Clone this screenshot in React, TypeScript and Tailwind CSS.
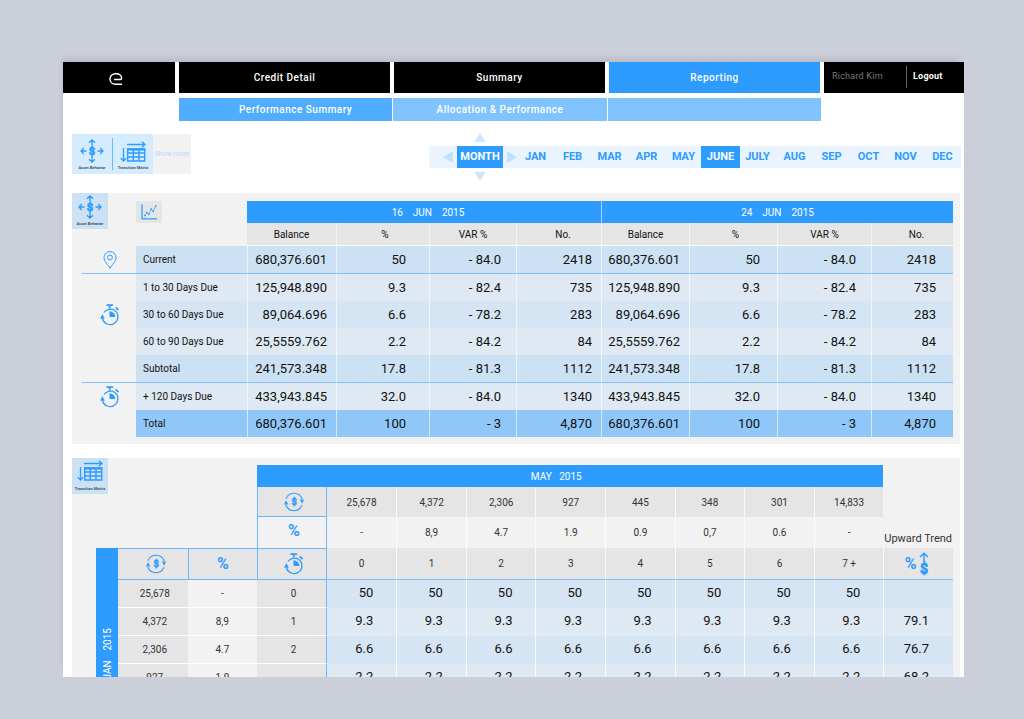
import { useState, type ReactNode } from "react";
import clsx from "clsx";

const MONTHS = ["JAN", "FEB", "MAR", "APR", "MAY", "JUNE", "JULY", "AUG", "SEP", "OCT", "NOV", "DEC"];

type BehaviorRow = {
  label: string;
  icon?: "pin" | "timer";
  values: [string, string, string, string];
  tone: string;
  line?: boolean;
};

const BEHAVIOR: BehaviorRow[] = [
  { label: "Current", icon: "pin", values: ["680,376.601", "50", "- 84.0", "2418"], tone: "bg-[#cce1f4]", line: true },
  { label: "1 to 30 Days Due", values: ["125,948.890", "9.3", "- 82.4", "735"], tone: "bg-[#dfe9f3]" },
  { label: "30 to 60 Days Due", icon: "timer", values: ["89,064.696", "6.6", "- 78.2", "283"], tone: "bg-[#d5e5f4]" },
  { label: "60 to 90 Days Due", values: ["25,5559.762", "2.2", "- 84.2", "84"], tone: "bg-[#dfe9f3]" },
  { label: "Subtotal", values: ["241,573.348", "17.8", "- 81.3", "1112"], tone: "bg-[#cce1f4]", line: true },
  { label: "+ 120 Days Due", icon: "timer", values: ["433,943.845", "32.0", "- 84.0", "1340"], tone: "bg-[#dfe9f3]" },
  { label: "Total", values: ["680,376.601", "100", "- 3", "4,870"], tone: "bg-[#90c7f9]" },
];

const BEHAVIOR_PADDING = ["pr-[9px]", "pr-[23px]", "pr-[15px]", "pr-[9px]", "pr-[9px]", "pr-[17px]", "pr-[15px]", "pr-[17px]"];

const MATRIX_HEAD = [
  { balance: "25,678", percent: "-", bucket: "0" },
  { balance: "4,372", percent: "8,9", bucket: "1" },
  { balance: "2,306", percent: "4.7", bucket: "2" },
  { balance: "927", percent: "1.9", bucket: "3" },
  { balance: "445", percent: "0.9", bucket: "4" },
  { balance: "348", percent: "0,7", bucket: "5" },
  { balance: "301", percent: "0.6", bucket: "6" },
  { balance: "14,833", percent: "-", bucket: "7 +" },
];

const MATRIX_ROWS = [
  { balance: "25,678", percent: "-", bucket: "0", value: "50", trend: "" },
  { balance: "4,372", percent: "8,9", bucket: "1", value: "9.3", trend: "79.1" },
  { balance: "2,306", percent: "4.7", bucket: "2", value: "6.6", trend: "76.7" },
  { balance: "927", percent: "1.9", bucket: "", value: "2.2", trend: "68.2" },
];

function Dollar({ x, y, size }: { x: number; y: number; size: number }) {
  return (
    <text
      x={x}
      y={y}
      fontSize={size}
      fontWeight="900"
      textAnchor="middle"
      fill="#2e9bff"
      stroke="#2e9bff"
      strokeWidth="0.6"
      fontFamily="Roboto, sans-serif"
    >
      $
    </text>
  );
}

function AssetBehaviorIcon() {
  return (
    <svg viewBox="0 0 24 24" className="size-6" fill="none" stroke="#2e9bff" strokeWidth="1.3" aria-hidden="true">
      <path d="M12 6.500V1M9 3.800 12 1l3 2.800M12 17.500v5.500M9 20.200l3 2.800 3-2.800M6.500 12H1M3.800 9 1 12l2.800 3M17.500 12H23M20.200 9l2.800 3-2.800 3" />
      <Dollar x={12} y={16} size={11} />
    </svg>
  );
}

function TransitionMatrixIcon() {
  return (
    <svg viewBox="0 0 26 22" className="h-[22px] w-[26px]" fill="none" stroke="#2e9bff" aria-hidden="true">
      <path strokeWidth="1.3" d="M7 3.500h18M21.800.800 25 3.500l-3.200 2.700M3.500 7v13M.800 17.200 3.500 20l2.700-2.800" />
      <path strokeWidth="1.4" d="M7.700 8h17v12h-17zM7.700 12h17M7.700 16h17M13.300 8v12M19 8v12" />
      <path strokeWidth="2.2" d="M7 8.500h18.300" />
    </svg>
  );
}

function TimerIcon() {
  return (
    <svg viewBox="0 0 20 22" className="h-[22px] w-5" fill="none" stroke="#2e9bff" strokeWidth="1.3" aria-hidden="true">
      <path d="M2.500 14.500A7.800 7.800 0 1 0 14.500 6.300M4 8.500a7.800 7.800 0 0 1 10.500-2.200" />
      <path d="M6.500 1.200h6.500M9.700 1v3.600M15.700 3.300l2.800 2.800" strokeWidth="1.7" />
      <path d="M9.500 7.300v5.700h5.900a5.800 5.800 0 0 0-5.900-5.700z" fill="#2e9bff" stroke="none" />
      <path d="M.200 14.700 2.300 10 4.800 14.700z" fill="#2e9bff" stroke="none" />
    </svg>
  );
}

function PinIcon() {
  return (
    <svg viewBox="0 0 14 18" className="h-[18px] w-3.5" fill="none" stroke="#2e9bff" aria-hidden="true">
      <path d="M7 17.300C5 13.800 1 10.400 1 6.600a6 6 0 0 1 12 0C13 10.400 9 13.800 7 17.300z" />
      <circle cx="7" cy="6.5" r="2.4" />
    </svg>
  );
}

function TurnoverIcon() {
  return (
    <svg viewBox="0 0 20 20" className="size-5" fill="none" stroke="#2e9bff" strokeWidth="1.1" aria-hidden="true">
      <path d="M1.800 13A8.700 8.700 0 0 0 18 13.300M18.200 7A8.700 8.700 0 0 0 2 6.700" />
      <path d="M0 12.500 1.800 8.300l2.600 4.200zM15.800 7.600H20l-1.800 4.200z" fill="#2e9bff" stroke="none" />
      <Dollar x={10} y={13.4} size={9} />
    </svg>
  );
}

function ChartIcon() {
  return (
    <svg viewBox="0 0 16 16" className="size-4" fill="none" stroke="#2e9bff" aria-hidden="true">
      <path d="M1 .5v14.300h15" strokeWidth="1.3" />
      <path d="M4 11 6 8.500l2 1.500 2.200-5 2 2.500L15 1.500" strokeWidth=".7" />
      <path d="M3 11.500h1.500M5 8.500h1.500M7 10.300h1.500M9.500 5h1.500M11.500 7.500H13M14 2h1.500" strokeWidth="1.6" />
    </svg>
  );
}

function UpwardIcon() {
  return (
    <svg viewBox="0 0 10 24" className="h-6 w-2.5" fill="none" stroke="#2e9bff" strokeWidth="1.4" aria-hidden="true">
      <path d="M5 10V1.200M1 5l4-3.800L9 5" />
      <Dollar x={5} y={22} size={14} />
    </svg>
  );
}

function Tile({ label, children }: { label: string; children: ReactNode }) {
  return (
    <div className="flex size-9 flex-col items-center justify-between overflow-hidden bg-[#cce1f4] pt-0.5 pb-[3px]">
      {children}
      <span className="text-[4px] leading-[5px] font-bold whitespace-nowrap text-[#3f5468]">{label}</span>
    </div>
  );
}

function ViewButton({ label, children }: { label: string; children: ReactNode }) {
  return (
    <button type="button" className="flex w-10 flex-col items-center justify-end gap-0.5 pb-1">
      {children}
      <span className="text-[4px] leading-[5px] font-bold whitespace-nowrap text-[#3f5468]">{label}</span>
    </button>
  );
}

function Header() {
  const tab = "flex items-center justify-center";
  return (
    <header>
      <div className="grid h-[31px] grid-cols-[112px_1fr_1fr_1fr_140px] gap-1 text-[10px] font-medium tracking-wider text-white">
        <a href="#" aria-label="Home" className={clsx(tab, "bg-black pt-0.5 pr-1.5")}>
          <svg viewBox="0 0 14 12" className="h-3 w-3.5" fill="none" stroke="#fff" strokeWidth="1.4" aria-hidden="true">
            <path d="M5 6.500h6.300c1 0 1.300-.6 1.300-1.500C12.600 2.500 10.500.800 7.500.800h-1C3.200.800 1 3 1 6s2.200 5.200 5.500 5.200H13" />
          </svg>
        </a>
        <a href="#" className={clsx(tab, "bg-black")}>Credit Detail</a>
        <a href="#" className={clsx(tab, "bg-black")}>Summary</a>
        <a href="#" aria-current="page" className={clsx(tab, "bg-[#2e9bff]")}>Reporting</a>
        <div className="flex items-center bg-black pb-0.5 text-[9px] tracking-wide">
          <span className="w-[82px] pl-2 font-normal text-[#777777]">Richard Kim</span>
          <a href="#" className="flex h-[22px] items-center border-l border-[#666666] pl-1.5 font-bold">Logout</a>
        </div>
      </div>
      <nav className="mt-[5px] mr-[143px] ml-[116px] grid h-[23px] grid-cols-3 gap-px text-[10px] font-medium tracking-wider text-white">
        <a href="#" className={clsx(tab, "bg-[#50adff] pl-5")}>Performance Summary</a>
        <a href="#" className={clsx(tab, "bg-[#81c3ff]")}>Allocation &amp; Performance</a>
        <span className="bg-[#81c3ff]" />
      </nav>
    </header>
  );
}

function Arrow({ label, path, box, className }: { label: string; path: string; box: string; className: string }) {
  return (
    <button type="button" aria-label={label} className="flex justify-center">
      <svg viewBox={box} className={className} aria-hidden="true">
        <path d={path} />
      </svg>
    </button>
  );
}

function MonthPicker() {
  const [month, setMonth] = useState("JUNE");

  return (
    <div className="flex text-[11px] font-bold text-[#2e9bff]">
      <div className="my-[13px] flex h-[22px] w-7 items-center justify-end bg-[#e9f4ff] pr-1">
        <Arrow label="Previous" box="0 0 10 12" path="M10 0v12L0 6z" className="h-3 w-2.5 fill-[#c0e1ff]" />
      </div>
      <div className="flex w-[46px] flex-col gap-1">
        <Arrow label="Up" box="0 0 12 9" path="M6 0l6 9H0z" className="h-[9px] w-3 fill-[#cfe8ff]" />
        <button type="button" className="h-[22px] bg-[#2e9bff] text-white">MONTH</button>
        <Arrow label="Down" box="0 0 12 9" path="M0 0h12L6 9z" className="h-[9px] w-3 fill-[#cfe8ff]" />
      </div>
      <div className="my-[13px] flex h-[22px] items-center bg-[#e9f4ff] pl-1">
        <Arrow label="Next" box="0 0 10 12" path="M0 0v12l10-6z" className="h-3 w-2.5 fill-[#c0e1ff]" />
        <div className="grid h-full grid-cols-[repeat(12,37px)]">
          {MONTHS.map((m) => (
            <button
              key={m}
              type="button"
              onClick={() => setMonth(m)}
              className={clsx("text-center", m === month && "-mx-px bg-[#2e9bff] text-white")}
            >
              {m}
            </button>
          ))}
        </div>
      </div>
    </div>
  );
}

function Toolbar() {
  return (
    <div className="mt-3 flex h-12 items-start justify-between pr-[3px] pl-[9px]">
      <div className="mt-px flex h-10 bg-[#f2f2f2]">
        <div className="flex bg-[#d5ecff]">
          <ViewButton label="Asset Behavior">
            <AssetBehaviorIcon />
          </ViewButton>
          <div className="my-1 w-px bg-[#6bb8fb]" />
          <ViewButton label="Transition Matrix">
            <TransitionMatrixIcon />
          </ViewButton>
        </div>
        <button type="button" className="w-[38px] text-[7px] whitespace-nowrap text-[#b5dafb]">Show more</button>
      </div>
      <MonthPicker />
    </div>
  );
}

function AssetBehavior() {
  return (
    <section className="mt-3 mr-1 ml-[9px] bg-[#f2f2f2] pt-2 pr-[7px] pb-[7px]">
      <table className="w-full table-fixed border-separate border-spacing-0 text-[#111111]">
        <colgroup>
          <col className="w-16" />
          <col className="w-[111px]" />
          <col className="w-[89px]" />
          <col className="w-[93px]" />
          <col className="w-[87px]" />
          <col className="w-[85px]" />
          <col className="w-[88px]" />
          <col className="w-[88px]" />
          <col className="w-[94px]" />
          <col className="w-[82px]" />
        </colgroup>
        <thead className="text-[10px]">
          <tr className="h-[22px]">
            <td rowSpan={2} className="p-0 align-top">
              <div className="-mt-2">
                <Tile label="Asset Behavior">
                  <AssetBehaviorIcon />
                </Tile>
              </div>
            </td>
            <td rowSpan={2} className="p-0 align-top">
              <button type="button" aria-label="Show chart" className="flex h-[22px] w-[26px] items-center justify-center bg-[#e5e5e5]">
                <ChartIcon />
              </button>
            </td>
            <th colSpan={4} className="bg-[#2e9bff] p-0 pl-2 font-normal whitespace-pre text-white">{"16    JUN    2015"}</th>
            <th colSpan={4} className="border-l border-[#a9d5ff] bg-[#2e9bff] p-0 font-normal whitespace-pre text-white">{"24    JUN    2015"}</th>
          </tr>
          <tr className="h-[23px]">
            {["Balance", "%", "VAR %", "No.", "Balance", "%", "VAR %", "No."].map((name, i) => (
              <th
                key={i}
                scope="col"
                className={clsx("border-b border-b-white bg-[#e5e5e5] p-0 font-normal", i > 0 && "border-l border-l-[#f4f4f4]", name === "%" && "pl-1", name === "No." && "pl-2")}
              >
                {name}
              </th>
            ))}
          </tr>
        </thead>
        <tbody className="text-[13px]">
          {BEHAVIOR.map((row) => {
            const line = row.line ? "h-7 border-b border-b-[#7dbdf8]" : "h-[27px]";
            return (
              <tr key={row.label}>
                <td className="p-0 pl-2.5">
                  <div className={clsx("flex items-center justify-center pl-0.5", line)}>
                    {row.icon === "pin" && <PinIcon />}
                    {row.icon === "timer" && <TimerIcon />}
                  </div>
                </td>
                <th scope="row" className={clsx("p-0 pl-[7px] text-left text-[10px] font-normal", row.tone, line)}>
                  {row.label}
                </th>
                {[...row.values, ...row.values].map((value, i) => (
                  <td key={i} className={clsx("border-l border-l-white/60 p-0 text-right", row.tone, line, BEHAVIOR_PADDING[i])}>
                    {value}
                  </td>
                ))}
              </tr>
            );
          })}
        </tbody>
      </table>
    </section>
  );
}

function TransitionMatrix() {
  const blue = "border-[#6bb8fb]";
  return (
    <section className="mt-3.5 mr-1 ml-[9px] bg-[#f2f2f2] pt-[7px] pr-[7px] pb-2">
      <table className="w-full table-fixed border-separate border-spacing-0 text-center text-[10px] text-[#333333]">
        <colgroup>
          <col className="w-6" />
          <col className="w-[22px]" />
          {Array.from({ length: 12 }, (_, i) => (
            <col key={i} />
          ))}
        </colgroup>
        <thead>
          <tr className="h-[22px]">
            <td colSpan={4} rowSpan={3} className="p-0 align-top">
              <div className="-mt-[7px]">
                <Tile label="Transition Matrix">
                  <TransitionMatrixIcon />
                </Tile>
              </div>
            </td>
            <th colSpan={9} className="bg-[#2e9bff] p-0 pr-7 font-normal whitespace-pre text-white">{"MAY   2015"}</th>
            <td />
          </tr>
          <tr className="h-[30px]">
            <th className={clsx("border-x border-b bg-[#e5e5e5] p-0", blue)}>
              <span className="flex justify-center pl-1"><TurnoverIcon /></span>
            </th>
            {MATRIX_HEAD.map((col, i) => (
              <td key={i} className={clsx("bg-[#e5e5e5] p-0", i > 0 && "border-l border-l-white/80")}>{col.balance}</td>
            ))}
            <td />
          </tr>
          <tr className="h-[31px]">
            <th className={clsx("border-x p-0 pb-1 text-[16px] leading-5 font-bold text-[#2e9bff]", blue)}>
              <span className="pl-1">%</span>
            </th>
            {MATRIX_HEAD.map((col, i) => (
              <td key={i} className={clsx("p-0", i > 0 && "border-l border-l-white/80")}>{col.percent}</td>
            ))}
            <td className="p-0 pb-0.5 align-bottom text-[11px] leading-[14px] whitespace-nowrap">Upward Trend</td>
          </tr>
        </thead>
        <tbody>
          <tr className="h-8">
            <td />
            <th rowSpan={5} className="bg-[#2e9bff] p-0 pt-20 align-top text-[10px] font-normal text-white">
              <span className="inline-block rotate-180 whitespace-pre [writing-mode:vertical-rl]">{"JAN    2015"}</span>
            </th>
            <th className={clsx("border-y bg-[#e5e5e5] p-0", blue)}>
              <span className="flex justify-center pl-1.5"><TurnoverIcon /></span>
            </th>
            <th className={clsx("border-y border-l bg-[#e5e5e5] p-0 text-[16px] leading-5 font-bold text-[#2e9bff]", blue)}>%</th>
            <th className={clsx("border bg-[#e5e5e5] p-0", blue)}>
              <span className="flex justify-center pl-1"><TimerIcon /></span>
            </th>
            {MATRIX_HEAD.map((col, i) => (
              <th key={i} scope="col" className={clsx("border-b border-b-[#7dbdf8] bg-[#e5e5e5] p-0 font-normal", i > 0 && "border-l border-l-white/80")}>
                {col.bucket}
              </th>
            ))}
            <td className="border-b border-l border-b-[#7dbdf8] border-l-white/80 bg-[#e5e5e5] p-0">
              <span className="flex items-center justify-center gap-0.5 pr-1 text-[16px] leading-5 font-bold text-[#2e9bff]">
                %<UpwardIcon />
              </span>
            </td>
          </tr>
          {MATRIX_ROWS.map((row, r) => {
            const tone = r % 2 === 0 ? "bg-[#d5e5f4]" : "bg-[#dfe9f3]";
            return (
              <tr key={row.balance} className="h-7">
                <td />
                <td className="border-b border-b-white bg-[#e5e5e5] p-0 pl-1">{row.balance}</td>
                <td className="border-b border-b-white p-0">{row.percent}</td>
                <th scope="row" className="border-r border-b border-r-[#6bb8fb] border-b-white bg-[#e5e5e5] p-0 pl-1 font-normal">{row.bucket}</th>
                {MATRIX_HEAD.map((_, i) => (
                  <td key={i} className={clsx("p-0 pr-[23px] pb-0.5 text-right text-[13px] text-[#111111]", tone, i > 0 && "border-l border-l-white/80")}>
                    {row.value}
                  </td>
                ))}
                <td className={clsx("border-l border-l-white/80 p-0 pr-6 pb-0.5 text-right text-[13px] text-[#111111]", tone)}>{row.trend}</td>
              </tr>
            );
          })}
        </tbody>
      </table>
    </section>
  );
}

export default function App() {
  return (
    <div className="h-screen bg-[#cbcfd9] pt-[62px] pr-[60px] pb-[42px] pl-[63px] font-[Roboto,sans-serif]">
      <main className="h-full overflow-hidden bg-white shadow-[-2px_-6px_6px_-3px_rgba(90,90,130,0.2)]">
        <Header />
        <Toolbar />
        <AssetBehavior />
        <TransitionMatrix />
      </main>
    </div>
  );
}
